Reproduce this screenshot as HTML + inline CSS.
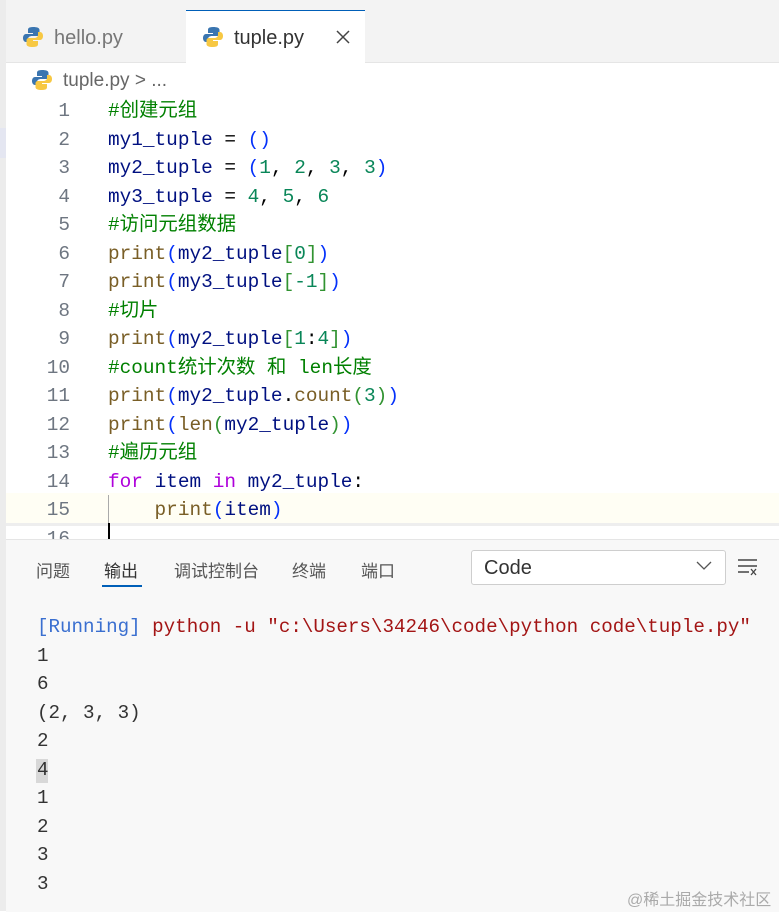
<!DOCTYPE html><html><head><meta charset="utf-8"><style>
body{margin:0;width:779px;height:911px;overflow:hidden;background:#fff;position:relative;font-family:"Liberation Sans","Noto Sans CJK SC",sans-serif}
.a{position:absolute}
.code{font-family:"Liberation Mono","Noto Sans CJK SC",monospace;font-size:19.4px;line-height:28.5px;white-space:pre}
.v{color:#001080}.p{color:#0431fa}.n{color:#098658}.f{color:#795e26}.g{color:#319331}.c{color:#008000}.k{color:#af00db}.t{color:#000}
.ln{width:70px;text-align:right;color:#6e7681}
</style></head><body>
<div class="a" style="left:0;top:0;width:779px;height:10px;background:#f3f3f3"></div>
<div class="a" style="left:0;top:0;width:6px;height:911px;background:#ececec"></div>
<div class="a" style="left:6px;top:10px;width:773px;height:52px;background:#f3f3f3;border-bottom:1px solid #e5e5e5"></div>
<div class="a" style="left:186px;top:10px;width:179px;height:53px;background:#fff;border-top:1px solid #005fb8"></div>
<svg class="a" style="left:22px;top:26px" width="22" height="22" viewBox="0 0 22 22"><path d="M11 1c-5 0-5 2-5 3v3h5v1H4c-2 0-3 2-3 4s1 4 3 4h2v-3c0-2 2-3 4-3h5c1.5 0 2.5-1 2.5-2.5V4c0-2-2-3-6.5-3z" fill="#3a75b0"/><path d="M11 21c5 0 5-2 5-3v-3h-5v-1h7c2 0 3-2 3-4s-1-4-3-4h-2v3c0 2-2 3-4 3H7c-1.5 0-2.5 1-2.5 2.5V18c0 2 2 3 6.5 3z" fill="#f7c843"/></svg>
<div class="a" style="left:54px;top:27px;font-size:20px;color:#777">hello.py</div>
<svg class="a" style="left:202px;top:26px" width="22" height="22" viewBox="0 0 22 22"><path d="M11 1c-5 0-5 2-5 3v3h5v1H4c-2 0-3 2-3 4s1 4 3 4h2v-3c0-2 2-3 4-3h5c1.5 0 2.5-1 2.5-2.5V4c0-2-2-3-6.5-3z" fill="#3a75b0"/><path d="M11 21c5 0 5-2 5-3v-3h-5v-1h7c2 0 3-2 3-4s-1-4-3-4h-2v3c0 2-2 3-4 3H7c-1.5 0-2.5 1-2.5 2.5V18c0 2 2 3 6.5 3z" fill="#f7c843"/></svg>
<div class="a" style="left:234px;top:27px;font-size:20px;color:#333">tuple.py</div>
<svg class="a" style="left:336px;top:30px" width="14" height="14"><path d="M1 1L13 13M13 1L1 13" stroke="#444" stroke-width="1.5"/></svg>
<svg class="a" style="left:31px;top:69px" width="22" height="22" viewBox="0 0 22 22"><path d="M11 1c-5 0-5 2-5 3v3h5v1H4c-2 0-3 2-3 4s1 4 3 4h2v-3c0-2 2-3 4-3h5c1.5 0 2.5-1 2.5-2.5V4c0-2-2-3-6.5-3z" fill="#3a75b0"/><path d="M11 21c5 0 5-2 5-3v-3h-5v-1h7c2 0 3-2 3-4s-1-4-3-4h-2v3c0 2-2 3-4 3H7c-1.5 0-2.5 1-2.5 2.5V18c0 2 2 3 6.5 3z" fill="#f7c843"/></svg>
<div class="a" style="left:63px;top:70px;font-size:19px;color:#666">tuple.py &gt; ...</div>
<div class="a" style="left:0;top:128px;width:6px;height:30px;background:#e4e6f1"></div>
<div class="a" style="left:6px;top:493px;width:773px;height:30px;background:#fffef4;border-bottom:3px solid #eee"></div>
<div class="a" style="left:108px;top:495px;width:1px;height:44px;background:#aaa"></div>
<div class="a" style="left:108px;top:523px;width:2px;height:16px;background:#000"></div>
<div class="a code ln" style="left:0;top:97px">1
2
3
4
5
6
7
8
9
10
11
12
13
14
15
16</div>
<div class="a code" style="left:108px;top:97px"><span class="c">#创建元组</span>
<span class="v">my1_tuple</span> <span class="t">=</span> <span class="p">()</span>
<span class="v">my2_tuple</span> <span class="t">=</span> <span class="p">(</span><span class="n">1</span>, <span class="n">2</span>, <span class="n">3</span>, <span class="n">3</span><span class="p">)</span>
<span class="v">my3_tuple</span> <span class="t">=</span> <span class="n">4</span>, <span class="n">5</span>, <span class="n">6</span>
<span class="c">#访问元组数据</span>
<span class="f">print</span><span class="p">(</span><span class="v">my2_tuple</span><span class="g">[</span><span class="n">0</span><span class="g">]</span><span class="p">)</span>
<span class="f">print</span><span class="p">(</span><span class="v">my3_tuple</span><span class="g">[</span><span class="n">-1</span><span class="g">]</span><span class="p">)</span>
<span class="c">#切片</span>
<span class="f">print</span><span class="p">(</span><span class="v">my2_tuple</span><span class="g">[</span><span class="n">1</span>:<span class="n">4</span><span class="g">]</span><span class="p">)</span>
<span class="c">#count统计次数 和 len长度</span>
<span class="f">print</span><span class="p">(</span><span class="v">my2_tuple</span>.<span class="f">count</span><span class="g">(</span><span class="n">3</span><span class="g">)</span><span class="p">)</span>
<span class="f">print</span><span class="p">(</span><span class="f">len</span><span class="g">(</span><span class="v">my2_tuple</span><span class="g">)</span><span class="p">)</span>
<span class="c">#遍历元组</span>
<span class="k">for</span> <span class="v">item</span> <span class="k">in</span> <span class="v">my2_tuple</span>:
    <span class="f">print</span><span class="p">(</span><span class="v">item</span><span class="p">)</span></div>
<div class="a" style="left:6px;top:539px;width:773px;height:372px;background:#f8f8f8;border-top:1px solid #e5e5e5"></div>
<div class="a" style="left:36px;top:557px;font-size:17px;color:#555">问题</div>
<div class="a" style="left:104px;top:557px;font-size:17px;color:#333">输出</div>
<div class="a" style="left:102px;top:585px;width:40px;height:2px;background:#005fb8"></div>
<div class="a" style="left:174px;top:557px;font-size:17px;color:#555">调试控制台</div>
<div class="a" style="left:292px;top:557px;font-size:17px;color:#555">终端</div>
<div class="a" style="left:361px;top:557px;font-size:17px;color:#555">端口</div>
<div class="a" style="left:471px;top:550px;width:253px;height:33px;background:#fff;border:1px solid #cecece;border-radius:3px"></div>
<div class="a" style="left:484px;top:557px;font-size:20px;color:#333">Code</div>
<svg class="a" style="left:696px;top:561px" width="16" height="10"><path d="M1 1L8 8L15 1" stroke="#555" fill="none" stroke-width="1.3"/></svg>
<svg class="a" style="left:737px;top:557px" width="24" height="20"><path d="M1 3H20M1 9H20M1 15H12" stroke="#444" stroke-width="1.5"/><path d="M14 12L19 18M19 12L14 18" stroke="#444" stroke-width="1.3"/></svg>
<div class="a" style="left:36px;top:759px;width:12px;height:24px;background:#d8d8d8"></div>
<div class="a code" style="left:37px;top:613px;color:#333;font-size:19.2px"><span style="color:#3a6fd0">[Running]</span> <span style="color:#a31515">python -u "c:\Users\34246\code\python code\tuple.py"</span>
1
6
(2, 3, 3)
2
4
1
2
3
3</div>
<div class="a" style="left:627px;top:886px;font-size:16px;color:#aaa">@稀土掘金技术社区</div>
</body></html>
